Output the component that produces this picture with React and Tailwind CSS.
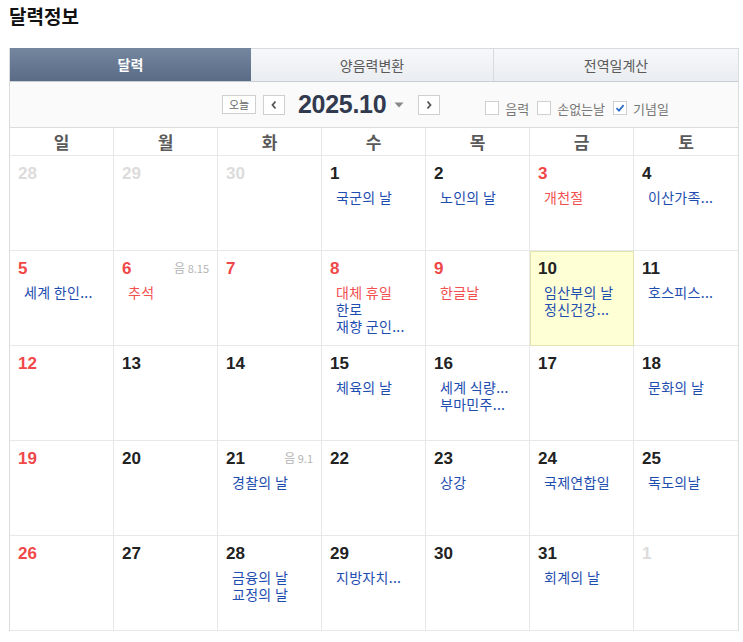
import React from 'react';

const font = { fontFamily: '"Liberation Sans", "Noto Sans CJK KR", sans-serif' };

const weeks = [
  [
    { d: 28, other: true },
    { d: 29, other: true },
    { d: 30, other: true },
    { d: 1, ev: [['국군의 날', 'b']] },
    { d: 2, ev: [['노인의 날', 'b']] },
    { d: 3, red: true, ev: [['개천절', 'r']] },
    { d: 4, ev: [['이산가족...', 'b']] },
  ],
  [
    { d: 5, ev: [['세계 한인...', 'b']] },
    { d: 6, red: true, lunar: '8.15', ev: [['추석', 'r']] },
    { d: 7, red: true },
    { d: 8, red: true, ev: [['대체 휴일', 'r'], ['한로', 'b'], ['재향 군인...', 'b']] },
    { d: 9, red: true, ev: [['한글날', 'r']] },
    { d: 10, today: true, ev: [['임산부의 날', 'b'], ['정신건강...', 'b']] },
    { d: 11, ev: [['호스피스...', 'b']] },
  ],
  [
    { d: 12 },
    { d: 13 },
    { d: 14 },
    { d: 15, ev: [['체육의 날', 'b']] },
    { d: 16, ev: [['세계 식량...', 'b'], ['부마민주...', 'b']] },
    { d: 17 },
    { d: 18, ev: [['문화의 날', 'b']] },
  ],
  [
    { d: 19 },
    { d: 20 },
    { d: 21, lunar: '9.1', ev: [['경찰의 날', 'b']] },
    { d: 22 },
    { d: 23, ev: [['상강', 'b']] },
    { d: 24, ev: [['국제연합일', 'b']] },
    { d: 25, ev: [['독도의날', 'b']] },
  ],
  [
    { d: 26 },
    { d: 27 },
    { d: 28, ev: [['금융의 날', 'b'], ['교정의 날', 'b']] },
    { d: 29, ev: [['지방자치...', 'b']] },
    { d: 30 },
    { d: 31, ev: [['회계의 날', 'b']] },
    { d: 1, other: true },
  ],
];

const Cell = ({ c, col, last }) => {
  let numColor = 'text-[#222]';
  if (c.other) numColor = 'text-[#dcdcdc]';
  else if (col === 0 || c.red) numColor = 'text-[#f04848]';

  return (
    <div
      className={`h-[95px] border-b border-[#e6e8ea] px-2 pt-[7px] ${last ? '' : 'border-r'} ${
        c.today ? 'bg-[#ffffd5] outline outline-1 -outline-offset-1 outline-[#e3e3b0]' : 'bg-white'
      }`}
    >
      <div className="flex items-start justify-between">
        <span className={`text-[17px] font-bold leading-[22px] ${numColor}`} style={font}>
          {c.d}
        </span>
        {c.lunar && (
          <span className="mt-[3px] text-[11px] leading-[14px] text-[#b4b4b4]">
            <span className="text-[12px]">음</span> {c.lunar}
          </span>
        )}
      </div>
      {c.ev && (
        <div className="mt-[4px] pl-[6px]">
          {c.ev.map(([t, k], i) => (
            <div
              key={i}
              className={`text-[14px] leading-[17px] tracking-[0.3px] whitespace-nowrap ${
                k === 'r' ? 'text-[#f25050]' : 'text-[#1e4db0]'
              }`}
            >
              {t}
            </div>
          ))}
        </div>
      )}
    </div>
  );
};

const Box = ({ checked, label }) => (
  <label className="flex items-center gap-[6px] text-[13px] leading-none text-[#777]">
    <span className="flex h-[14px] w-[14px] items-center justify-center border border-[#cfcfcf] bg-white">
      {checked && (
        <svg width="10" height="10" viewBox="0 0 10 10">
          <path d="M1.5 5.2 L4 7.6 L8.6 2.2" fill="none" stroke="#2f6fc9" strokeWidth="1.8" />
        </svg>
      )}
    </span>
    {label}
  </label>
);

const App = () => {
  const days = ['일', '월', '화', '수', '목', '금', '토'];
  return (
    <div className="w-[743px] bg-white pl-[9px] pt-[3px]" style={{ fontFamily: '"Noto Sans CJK KR", "Noto Sans", sans-serif' }}>
      <h1 className="text-[19px] font-bold leading-[26px] text-[#111]">달력정보</h1>

      <div className="mt-[19px] w-[730px] border-l border-r border-[#dcdcdc]">
        <div className="grid h-[34px] grid-cols-[241px_243px_1fr] border-b border-[#c9ced6] text-[14px]">
          <div className="flex items-center justify-center bg-gradient-to-b from-[#75869f] to-[#5a6b86] font-bold text-white">
            달력
          </div>
          <div className="flex items-center justify-center border-t border-r border-[#d7dbe0] bg-gradient-to-b from-[#f7f8fa] to-[#eaedf1] text-[#5a5a5a]">
            양음력변환
          </div>
          <div className="flex items-center justify-center border-t border-[#d7dbe0] bg-gradient-to-b from-[#f7f8fa] to-[#eaedf1] text-[#5a5a5a]">
            전역일계산
          </div>
        </div>

        <div className="flex h-[46px] items-center border-b border-[#dcdcdc] bg-[#fafafa]">
          <div className="ml-[212px] flex items-center">
            <button className="flex h-[19px] w-[34px] items-center justify-center border border-[#cfcfcf] bg-white text-[11px] leading-none text-[#666]">
              오늘
            </button>
            <button className="ml-[7px] flex h-[20px] w-[22px] items-center justify-center border border-[#cfcfcf] bg-white">
              <svg width="8" height="10" viewBox="0 0 8 10">
                <path d="M5.5 1.5 L2.5 5 L5.5 8.5" fill="none" stroke="#555" strokeWidth="1.8" />
              </svg>
            </button>
            <span className="ml-[13px] text-[25px] font-bold leading-none tracking-[-0.3px] text-[#323a50]" style={font}>
              2025.10
            </span>
            <svg className="ml-[8px]" width="10" height="6" viewBox="0 0 10 6">
              <path d="M0.5 0.5 H9.5 L5 5.5 Z" fill="#888" />
            </svg>
            <button className="ml-[14px] flex h-[20px] w-[22px] items-center justify-center border border-[#cfcfcf] bg-white">
              <svg width="8" height="10" viewBox="0 0 8 10">
                <path d="M2.5 1.5 L5.5 5 L2.5 8.5" fill="none" stroke="#555" strokeWidth="1.8" />
              </svg>
            </button>
          </div>
          <div className="ml-[45px] mt-[7px] flex items-center gap-[8px]">
            <Box label="음력" />
            <Box label="손없는날" />
            <Box checked label="기념일" />
          </div>
        </div>

        <div className="grid grid-cols-7">
          {days.map((d, i) => (
            <div
              key={d}
              className={`flex h-[28px] items-center justify-center border-b border-[#e6e8ea] text-[17px] font-bold text-[#5a5a5a] ${
                i < 6 ? 'border-r' : ''
              }`}
            >
              {d}
            </div>
          ))}
          {weeks.map((w, wi) =>
            w.map((c, ci) => <Cell key={`${wi}-${ci}`} c={c} col={ci} last={ci === 6} />)
          )}
        </div>
      </div>
    </div>
  );
};

export default App;
